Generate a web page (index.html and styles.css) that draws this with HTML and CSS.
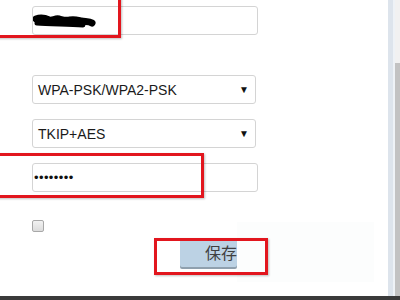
FILE: index.html
```html
<!DOCTYPE html>
<html>
<head>
<meta charset="utf-8">
<link rel="stylesheet" href="styles.css">
</head>
<body>
<div class="page">
  <div class="content">
    <div class="field text-input first">
      <svg class="scribble" width="64" height="18" viewBox="0 0 64 18"><path d="M3 7 C8 5 12 6 16 8 C20 9 22 6 26 7 C30 8 33 9 37 8 C41 7 44 8 48 9 C52 10 56 9 59 11" stroke="#000" stroke-width="7" fill="none" stroke-linecap="round"/><path d="M4 11 C14 12 30 12 50 13" stroke="#000" stroke-width="5" fill="none" stroke-linecap="round"/></svg>
    </div>
    <div class="field select mode">
      <span>WPA-PSK/WPA2-PSK</span><span class="arrow">▼</span>
    </div>
    <div class="field select cipher">
      <span>TKIP+AES</span><span class="arrow">▼</span>
    </div>
    <div class="field text-input pass">
      <span class="dots">••••••••</span>
    </div>
    <div class="check"></div>
    <div class="actions">
      <button class="save">保存</button>
    </div>
  </div>
  <div class="scrollbar">
    <div class="gutter"></div>
    <div class="rail">
      <div class="rail-top"></div>
      <div class="thumb"></div>
    </div>
  </div>
  <div class="haze"></div>
  <div class="mark mark1"></div>
  <div class="mark mark2"></div>
  <div class="mark mark3"></div>
</div>
<div class="bottombar"></div>
</body>
</html>
```
FILE: styles.css
```css
html, body {
  margin: 0;
  padding: 0;
  background: #fff;
  overflow: hidden;
}
body {
  width: 400px;
  height: 300px;
  font-family: "Liberation Sans", Arial, sans-serif;
}
.page {
  position: relative;
  display: flex;
  height: 296px;
  width: 400px;
}
.content {
  flex: 1;
  display: flex;
  flex-direction: column;
  padding-left: 32px;
  padding-top: 6px;
}
.field {
  box-sizing: border-box;
  height: 29px;
  border: 1px solid #d4d4d4;
  border-radius: 3px;
  background: #fff;
  display: flex;
  align-items: center;
}
.text-input {
  width: 226px;
}
.select {
  width: 224px;
  padding-left: 5px;
  padding-right: 6px;
  justify-content: space-between;
  font-size: 14px;
  color: #1a1a1a;
}
.mode { margin-top: 40px; }
.cipher { margin-top: 15px; }
.pass { margin-top: 15px; padding-left: 1px; }
.scribble {
  margin-top: 1px;
}
.arrow {
  font-size: 10px;
  color: #111;
}
.dots {
  font-size: 13px;
  letter-spacing: 0.4px;
  color: #111;
  line-height: 1;
}
.check {
  margin-top: 28px;
  width: 12px;
  height: 12px;
  box-sizing: border-box;
  border: 1px solid #a8a8a8;
  border-radius: 2px;
  background: linear-gradient(#f2f2f2, #dcdcdc);
}
.actions {
  margin-top: 7px;
  padding-left: 148px;
}
.save {
  width: 57px;
  height: 28px;
  border: none;
  border-radius: 2px;
  background: #bcd2e4;
  box-shadow: 0 2px 0 #8fa0ae;
  font-family: "Noto Sans CJK SC", sans-serif;
  font-size: 16px;
  color: #404040;
  text-align: right;
  padding: 0 0 2px 0;
  margin: 0;
}
.scrollbar {
  width: 12px;
  display: flex;
}
.gutter {
  width: 5px;
  background: #dde4ec;
  border-right: 2px solid #eef2f6;
}
.rail {
  flex: 1;
  display: flex;
  flex-direction: column;
}
.rail-top {
  height: 63px;
  background: #f1f1f1;
}
.thumb {
  flex: 1;
  background: #c2c2c2;
}
.haze {
  position: absolute;
  left: 237px;
  top: 222px;
  width: 137px;
  height: 60px;
  background: rgba(240, 243, 246, 0.2);
}
.mark {
  position: absolute;
  border: 3px solid #e2161e;
  box-sizing: border-box;
  box-shadow: 1px 1px 2px rgba(0,0,0,0.25);
}
.mark1 { left: -4px; top: -4px; width: 125px; height: 42px; }
.mark2 { left: -4px; top: 153px; width: 208px; height: 45px; }
.mark3 { left: 154px; top: 238px; width: 114px; height: 37px; }
.bottombar {
  height: 4px;
  background: #3a3a3a;
}
```
